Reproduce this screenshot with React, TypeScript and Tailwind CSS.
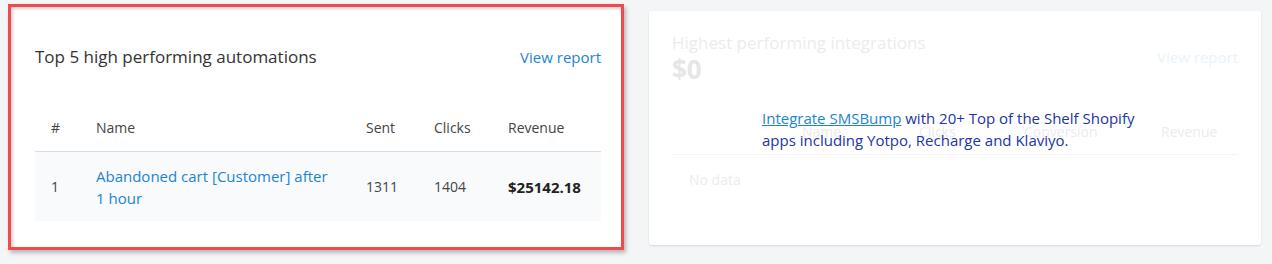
import React from "react";

const font = { fontFamily: '"Segoe UI", "Open Sans", "Noto Sans", sans-serif' };

const automations = [
  { rank: 1, name: "Abandoned cart [Customer] after 1 hour", sent: 1311, clicks: 1404, revenue: "$25142.18" },
];

const cols = "grid grid-cols-[45px_270px_68px_74px_1fr]";

function AutomationsCard() {
  return (
    <div className="w-[616px] h-[246px] border-[3px] border-[#f24a4a] shadow-[2px_3px_4px_rgba(0,0,0,0.25)]">
      <div className="h-full bg-white shadow-[inset_2px_2px_3px_rgba(0,0,0,0.18)] pl-6 pr-5 pt-[38px]">
        <div className="flex items-center justify-between h-6">
          <h2 className="text-[17px] text-[#333]">Top 5 high performing automations</h2>
          <a className="text-[15px] text-[#1b84d4]">View report</a>
        </div>
        <div className="mt-[35px] text-[14px]">
          <div className={`${cols} h-12 items-center text-[#444] border-b border-[#d8dde3]`}>
            <div className="pl-4">#</div>
            <div className="pl-4">Name</div>
            <div className="pl-4">Sent</div>
            <div className="pl-4">Clicks</div>
            <div className="pl-4">Revenue</div>
          </div>
          {automations.map((a) => (
            <div key={a.rank} className={`${cols} items-center bg-[#f9fafc] h-[69px] leading-[22px] text-[#444]`}>
              <div className="pl-4">{a.rank}</div>
              <div className="pl-4 pr-5 text-[15px] text-[#1b84d4]">{a.name}</div>
              <div className="pl-4">{a.sent}</div>
              <div className="pl-4">{a.clicks}</div>
              <div className="pl-4 text-[15px] font-bold text-[#222]">{a.revenue}</div>
            </div>
          ))}
        </div>
      </div>
    </div>
  );
}

function IntegrationsCard() {
  return (
    <div className="relative w-[612px] h-[234px] mt-[7px] bg-white rounded-[3px] shadow-[0_1px_2px_rgba(0,0,0,0.12)] px-[23px] pt-5">
      <div className="flex items-center justify-between">
        <div>
          <div className="text-[17px] leading-6 text-[#ececec]">Highest performing integrations</div>
          <div className="text-[26px] leading-7 font-bold text-[#e6e6e6]">$0</div>
        </div>
        <a className="text-[15px] text-[#eaf3fb]">View report</a>
      </div>
      <div className="mt-[25px] text-[14px] text-[#ececec]">
        <div className="grid grid-cols-[130px_117px_105px_137px_1fr] h-[47px] items-center border-b border-[#f4f4f4]">
          <div></div>
          <div>Name</div>
          <div>Clicks</div>
          <div>Conversion</div>
          <div>Revenue</div>
        </div>
        <div className="pl-[17px] pt-[14px]">No data</div>
      </div>
      <p className="absolute left-[113px] top-[96px] w-[390px] text-[15px] leading-[22px] text-[#2234a6]">
        <a className="text-[#1b84d4] underline">Integrate SMSBump</a> with 20+ Top of the Shelf Shopify apps including Yotpo, Recharge and Klaviyo.
      </p>
    </div>
  );
}

export default function App() {
  return (
    <div className="w-[1272px] h-[264px] bg-[#f4f5f7] flex items-start gap-[25px] pl-2 pt-1" style={font}>
      <AutomationsCard />
      <IntegrationsCard />
    </div>
  );
}
